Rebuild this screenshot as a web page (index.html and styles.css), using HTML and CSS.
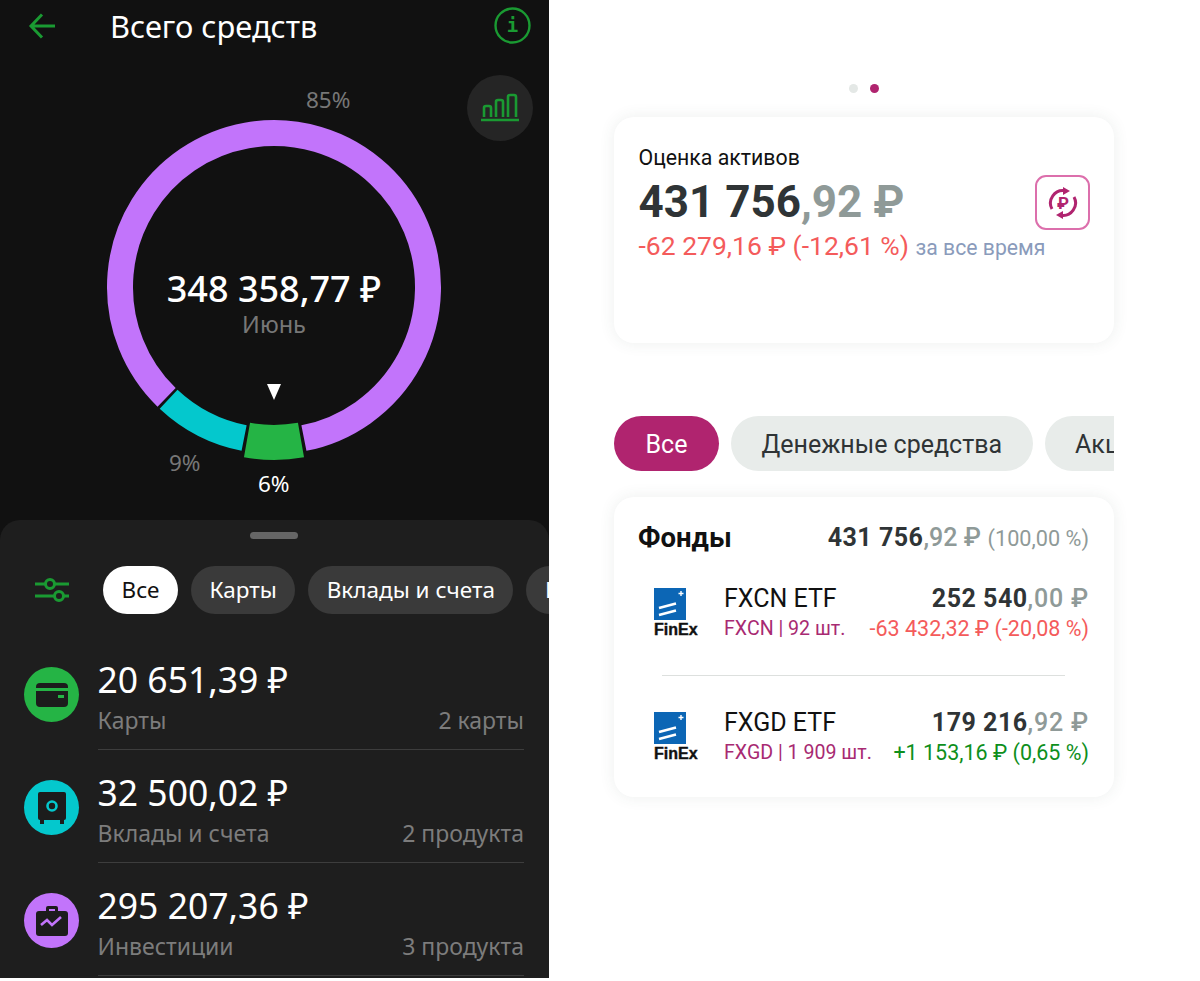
FILE: index.html
```html
<!DOCTYPE html>
<html lang="ru">
<head>
    <meta charset="UTF-8">
    <title>Всего средств</title>
    <link rel="stylesheet" href="styles.css">
</head>
<body>
    <div class="page">
        <!-- Left phone screen -->
        <div class="dark">
            <div class="top-bar">
                <svg class="back" width="28" height="28" viewBox="0 0 28 28"><path d="M14 2.5 3 14 14 25.5M3 14H27" fill="none" stroke="#1a9a32" stroke-width="3"/></svg>
                <div class="title">Всего средств</div>
                <svg class="info" width="37" height="37" viewBox="0 0 37 37"><circle cx="18.5" cy="18.5" r="17" fill="none" stroke="#1a9a32" stroke-width="2.4"/><text x="18.5" y="25" text-anchor="middle" class="info-i">i</text></svg>
            </div>
            <div class="chart">
                <svg class="ring" width="549" height="466" viewBox="0 54 549 466">
                    <path d="M303.9 438.1A154 154 0 1 0 166.6 397.4" fill="none" stroke="#c274fb" stroke-width="26"/>
                    <path d="M244.1 438.1A154 154 0 0 1 168.6 399.3" fill="none" stroke="#04c8cd" stroke-width="26"/>
                    <path d="M247 440.1A155.5 155.5 0 0 0 301 440.1" fill="none" stroke="#25b445" stroke-width="35"/>
                    <path d="M267 384H281L274 400Z" fill="#fff"/>
                </svg>
                <div class="pct pct-85">85%</div>
                <div class="pct pct-9">9%</div>
                <div class="pct pct-6">6%</div>
                <div class="chart-btn">
                    <svg width="38" height="30" viewBox="0 0 38 30"><path d="M0 27H38M3 24V15Q3 13 5 13H8Q10 13 10 15V24M15 24V9Q15 7 17 7H20Q22 7 22 9V24M27 24V4Q27 2 29 2H33Q35 2 35 4V24" fill="none" stroke="#1a9a32" stroke-width="2.6"/></svg>
                </div>
                <div class="center">
                    <div class="center-sum">348 358,77 ₽</div>
                    <div class="center-month">Июнь</div>
                </div>
            </div>
            <div class="sheet">
                <div class="handle"></div>
                <div class="filters">
                    <svg class="sliders" width="36" height="26" viewBox="0 0 36 26"><path d="M1 7H11M21 7H35M1 19H20M30 19H35" stroke="#1a9a32" stroke-width="3" fill="none"/><circle cx="16" cy="7" r="4.5" fill="none" stroke="#1a9a32" stroke-width="3"/><circle cx="25" cy="19" r="4.5" fill="none" stroke="#1a9a32" stroke-width="3"/></svg>
                    <div class="pill pill-on">Все</div>
                    <div class="pill">Карты</div>
                    <div class="pill">Вклады и счета</div>
                    <div class="pill">Инвестиции</div>
                </div>
                <div class="row">
                    <div class="row-icon green">
                        <svg width="32" height="26" viewBox="0 0 32 26"><rect width="32" height="24" y="1" rx="4" fill="#1c1c1c"/><rect y="6" width="32" height="3" fill="#25b445"/><rect x="22" y="13" width="6" height="3" fill="#25b445"/></svg>
                    </div>
                    <div class="row-body">
                        <div class="row-sum">20 651,39 ₽</div>
                        <div class="row-sub"><span>Карты</span><span>2 карты</span></div>
                    </div>
                </div>
                <div class="row">
                    <div class="row-icon cyan">
                        <svg width="30" height="32" viewBox="0 0 30 32"><rect width="28" height="28" x="1" y="0" rx="2" fill="#1c1c1c"/><rect x="3" y="27" width="4" height="5" fill="#1c1c1c"/><rect x="23" y="27" width="4" height="5" fill="#1c1c1c"/><circle cx="15" cy="14" r="4.5" fill="none" stroke="#04c8cd" stroke-width="2.6"/></svg>
                    </div>
                    <div class="row-body">
                        <div class="row-sum">32 500,02 ₽</div>
                        <div class="row-sub"><span>Вклады и счета</span><span>2 продукта</span></div>
                    </div>
                </div>
                <div class="row">
                    <div class="row-icon purple">
                        <svg width="32" height="32" viewBox="0 0 32 32"><path d="M10 7V3Q10 1 12 1H20Q22 1 22 3V7H19V4H13V7Z" fill="#1c1c1c"/><rect y="6" width="32" height="25" rx="3" fill="#1c1c1c"/><path d="M5 20 11 15 16 20 25 12" fill="none" stroke="#c274fb" stroke-width="2.6"/></svg>
                    </div>
                    <div class="row-body">
                        <div class="row-sum">295 207,36 ₽</div>
                        <div class="row-sub"><span>Инвестиции</span><span>3 продукта</span></div>
                    </div>
                </div>
            </div>
        </div>

        <!-- Right phone screen -->
        <div class="light">
            <div class="dots"><i class="dot"></i><i class="dot dot-on"></i></div>
            <div class="card card-total">
                <div class="total-text">
                    <div class="total-label">Оценка активов</div>
                    <div class="total-sum">431 756<span class="dim">,92 ₽</span></div>
                    <div class="total-change"><span class="neg">-62 279,16 ₽ (-12,61 %)</span> <span class="period">за все время</span></div>
                </div>
                <div class="cur-btn">
                    <svg width="32" height="32" viewBox="0 0 32 32">
                        <path d="M5 22A12.5 12.5 0 0 1 18 3.7M27 10A12.5 12.5 0 0 1 14 28.3" fill="none" stroke="#b0246f" stroke-width="3"/>
                        <path d="M16 0 23 4 16 8ZM16 24 9 28 16 32Z" fill="#b0246f"/>
                        <text x="16" y="22" text-anchor="middle" class="cur-sign">₽</text>
                    </svg>
                </div>
            </div>
            <div class="tabs">
                <div class="tab tab-on">Все</div>
                <div class="tab">Денежные средства</div>
                <div class="tab">Акции</div>
            </div>
            <div class="card card-funds">
                <div class="funds-head">
                    <div class="funds-title">Фонды</div>
                    <div class="funds-sum"><b>431 756</b><span class="dim">,92 ₽</span> <span class="funds-pct">(100,00 %)</span></div>
                </div>
                <div class="fund">
                    <div class="logo">
                        <svg width="32" height="32" viewBox="0 0 32 32"><rect width="32" height="32" fill="#0c66b5"/><path d="M5 20 22 15.5M5 27 22 22.5" stroke="#fff" stroke-width="2.6"/><path d="M24.5 5.5H29.5M27 3V8" stroke="#fff" stroke-width="1.4"/></svg>
                        <div class="logo-name">FinEx</div>
                    </div>
                    <div class="fund-left">
                        <div class="fund-name">FXCN ETF</div>
                        <div class="fund-qty">FXCN | 92 шт.</div>
                    </div>
                    <div class="fund-right">
                        <div class="fund-sum"><b>252 540</b><span class="dim">,00 ₽</span></div>
                        <div class="fund-change neg">-63 432,32 ₽ (-20,08 %)</div>
                    </div>
                </div>
                <div class="fund-line"></div>
                <div class="fund">
                    <div class="logo">
                        <svg width="32" height="32" viewBox="0 0 32 32"><rect width="32" height="32" fill="#0c66b5"/><path d="M5 20 22 15.5M5 27 22 22.5" stroke="#fff" stroke-width="2.6"/><path d="M24.5 5.5H29.5M27 3V8" stroke="#fff" stroke-width="1.4"/></svg>
                        <div class="logo-name">FinEx</div>
                    </div>
                    <div class="fund-left">
                        <div class="fund-name">FXGD ETF</div>
                        <div class="fund-qty">FXGD | 1 909 шт.</div>
                    </div>
                    <div class="fund-right">
                        <div class="fund-sum"><b>179 216</b><span class="dim">,92 ₽</span></div>
                        <div class="fund-change pos">+1 153,16 ₽ (0,65 %)</div>
                    </div>
                </div>
            </div>
        </div>
    </div>
</body>
</html>
```

FILE: styles.css
```css
body {
    margin: 0;
    background: #fff;
    font-family: "Noto Sans", sans-serif;
}
.page {
    display: flex;
    width: 1200px;
    height: 981px;
    overflow: hidden;
}

/* Left screen */
.dark {
    width: 549px;
    height: 978px;
    background: #111;
    color: #fff;
    display: flex;
    flex-direction: column;
}
.top-bar {
    height: 54px;
    box-sizing: border-box;
    display: flex;
    align-items: center;
    padding: 0 18px 3px 28px;
}
.title {
    font-size: 30.8px;
    margin-left: 54px;
    flex: 1;
}
.info-i {
    font-family: "DejaVu Sans Mono", monospace;
    font-weight: bold;
    font-size: 19px;
    fill: #1a9a32;
}
.chart {
    position: relative;
    height: 466px;
}
.ring {
    display: block;
}
.pct {
    position: absolute;
    font-size: 22.5px;
    color: #777;
}
.pct-85 {
    left: 306px;
    top: 30px;
}
.pct-9 {
    left: 169px;
    top: 393px;
}
.pct-6 {
    left: 258px;
    top: 414px;
    color: #fff;
}
.chart-btn {
    position: absolute;
    left: 467px;
    top: 21px;
    width: 66px;
    height: 66px;
    border-radius: 50%;
    background: #252525;
    display: flex;
    align-items: center;
    justify-content: center;
}
.center {
    position: absolute;
    left: 124px;
    top: 213px;
    width: 300px;
    text-align: center;
}
.center-sum {
    font-size: 36px;
    font-weight: 500;
    line-height: 44px;
}
.center-month {
    font-size: 23.5px;
    color: #777;
    line-height: 26px;
}
.sheet {
    flex: 1;
    background: #1e1e1e;
    border-radius: 20px 20px 0 0;
    overflow: hidden;
}
.handle {
    width: 48px;
    height: 7px;
    border-radius: 4px;
    background: #666;
    margin: 12px 0 27px 250px;
}
.filters {
    display: flex;
    align-items: center;
    gap: 13px;
    height: 48px;
    margin-bottom: 24px;
    white-space: nowrap;
}
.sliders {
    margin-left: 34px;
    margin-right: 20px;
    flex: none;
}
.pill {
    height: 48px;
    line-height: 48px;
    padding: 0 18.5px;
    border-radius: 24px;
    background: #3a3a3a;
    font-size: 22.5px;
    flex: none;
}
.pill-on {
    background: #fff;
    color: #111;
}
.row {
    display: flex;
    height: 113px;
    padding-left: 24px;
    padding-right: 25px;
}
.row-icon {
    width: 55px;
    height: 55px;
    border-radius: 50%;
    margin-top: 29px;
    display: flex;
    align-items: center;
    justify-content: center;
    flex: none;
}
.green {
    background: #25b445;
}
.cyan {
    background: #04c8cd;
}
.purple {
    background: #c274fb;
}
.row-body {
    flex: 1;
    margin-left: 18.5px;
    height: 111px;
    border-bottom: 1px solid #3d3d3d;
}
.row-sum {
    font-size: 35.5px;
    line-height: 44px;
    padding-top: 19px;
}
.row-sub {
    display: flex;
    justify-content: space-between;
    font-size: 23px;
    line-height: 30px;
    color: #7c7c7c;
    margin-top: 4px;
}

/* Right screen */
.light {
    margin-left: 65px;
    width: 500px;
    font-family: Roboto, sans-serif;
    color: #111;
}
.dots {
    display: flex;
    justify-content: center;
    gap: 12px;
    padding-top: 84px;
    height: 33px;
}
.dot {
    width: 9px;
    height: 9px;
    border-radius: 50%;
    background: #e4e8e6;
}
.dot-on {
    background: #b0246f;
}
.card {
    background: #fff;
    border-radius: 20px;
    box-shadow: 0 0 16px rgba(60, 80, 70, 0.09);
}
.card-total {
    height: 226px;
    box-sizing: border-box;
    padding: 28px 24px 0 24.5px;
    display: flex;
    justify-content: space-between;
    position: relative;
}
.total-label {
    font-size: 21.3px;
    line-height: 26px;
}
.total-sum {
    font-size: 44px;
    font-weight: 700;
    line-height: 50px;
    margin-top: 6px;
    color: #2f3436;
}
.dim {
    color: #8f9a98;
}
.total-change {
    font-size: 26.5px;
    line-height: 30px;
    margin-top: 4px;
    white-space: nowrap;
}
.neg {
    color: #f45b5b;
}
.pos {
    color: #0e8f1c;
}
.period {
    font-size: 21.2px;
    color: #8a9bbb;
}
.cur-btn {
    position: absolute;
    right: 24px;
    top: 58px;
    width: 55px;
    height: 55px;
    box-sizing: border-box;
    border: 2px solid #dc6fac;
    border-radius: 11px;
    display: flex;
    align-items: center;
    justify-content: center;
}
.cur-sign {
    font-size: 17px;
    font-weight: 700;
    fill: #b0246f;
}
.tabs {
    display: flex;
    gap: 12px;
    margin-top: 73px;
    height: 55px;
    overflow: hidden;
    white-space: nowrap;
}
.tab {
    flex: none;
    height: 55px;
    line-height: 57px;
    padding: 0 30.5px;
    border-radius: 28px;
    background: #e8ecea;
    font-size: 25px;
    color: #2f3436;
}
.tab-on {
    padding: 0 31.5px;
    background: #b0246f;
    color: #fff;
}
.card-funds {
    margin-top: 26px;
    height: 300px;
    box-sizing: border-box;
    padding: 22px 25px 0 24px;
}
.funds-head {
    display: flex;
    justify-content: space-between;
    align-items: center;
    height: 36px;
}
.funds-title {
    font-size: 27.5px;
    font-weight: 700;
    color: #111;
}
.funds-sum {
    font-size: 25px;
    color: #2f3436;
    letter-spacing: 0.5px;
}
.funds-sum .dim {
    font-weight: 500;
    letter-spacing: 0;
}
.fund-sum .dim {
    font-weight: 500;
    letter-spacing: 0.8px;
}
.funds-pct {
    font-size: 21.7px;
    color: #8f9a98;
    letter-spacing: 0;
}
.fund {
    display: flex;
    margin-top: 33px;
    height: 64px;
}
.fund-line + .fund {
    margin-top: 36px;
}
.logo {
    width: 86px;
    padding-left: 16px;
    box-sizing: border-box;
    flex: none;
}
.logo svg {
    display: block;
}
.logo-name {
    font-family: "Liberation Sans", sans-serif;
    font-size: 16px;
    font-weight: 700;
    line-height: 20px;
    color: #111;
    -webkit-text-stroke: 0.4px #111;
}
.fund-left {
    flex: 1;
    padding-top: 1px;
}
.fund-name {
    font-size: 25px;
    line-height: 20px;
}
.fund-qty {
    font-size: 19.6px;
    line-height: 24px;
    margin-top: 8px;
    color: #a82a72;
    white-space: nowrap;
}
.fund-right {
    text-align: right;
    padding-top: 1px;
}
.fund-sum {
    font-size: 25px;
    line-height: 20px;
    color: #2f3436;
    letter-spacing: 0.5px;
}
.fund-change {
    font-size: 21.5px;
    line-height: 24px;
    margin-top: 8px;
    white-space: nowrap;
}
.fund-line {
    height: 1px;
    background: #dde0de;
    margin: 23px 24px 0 24px;
}
```
